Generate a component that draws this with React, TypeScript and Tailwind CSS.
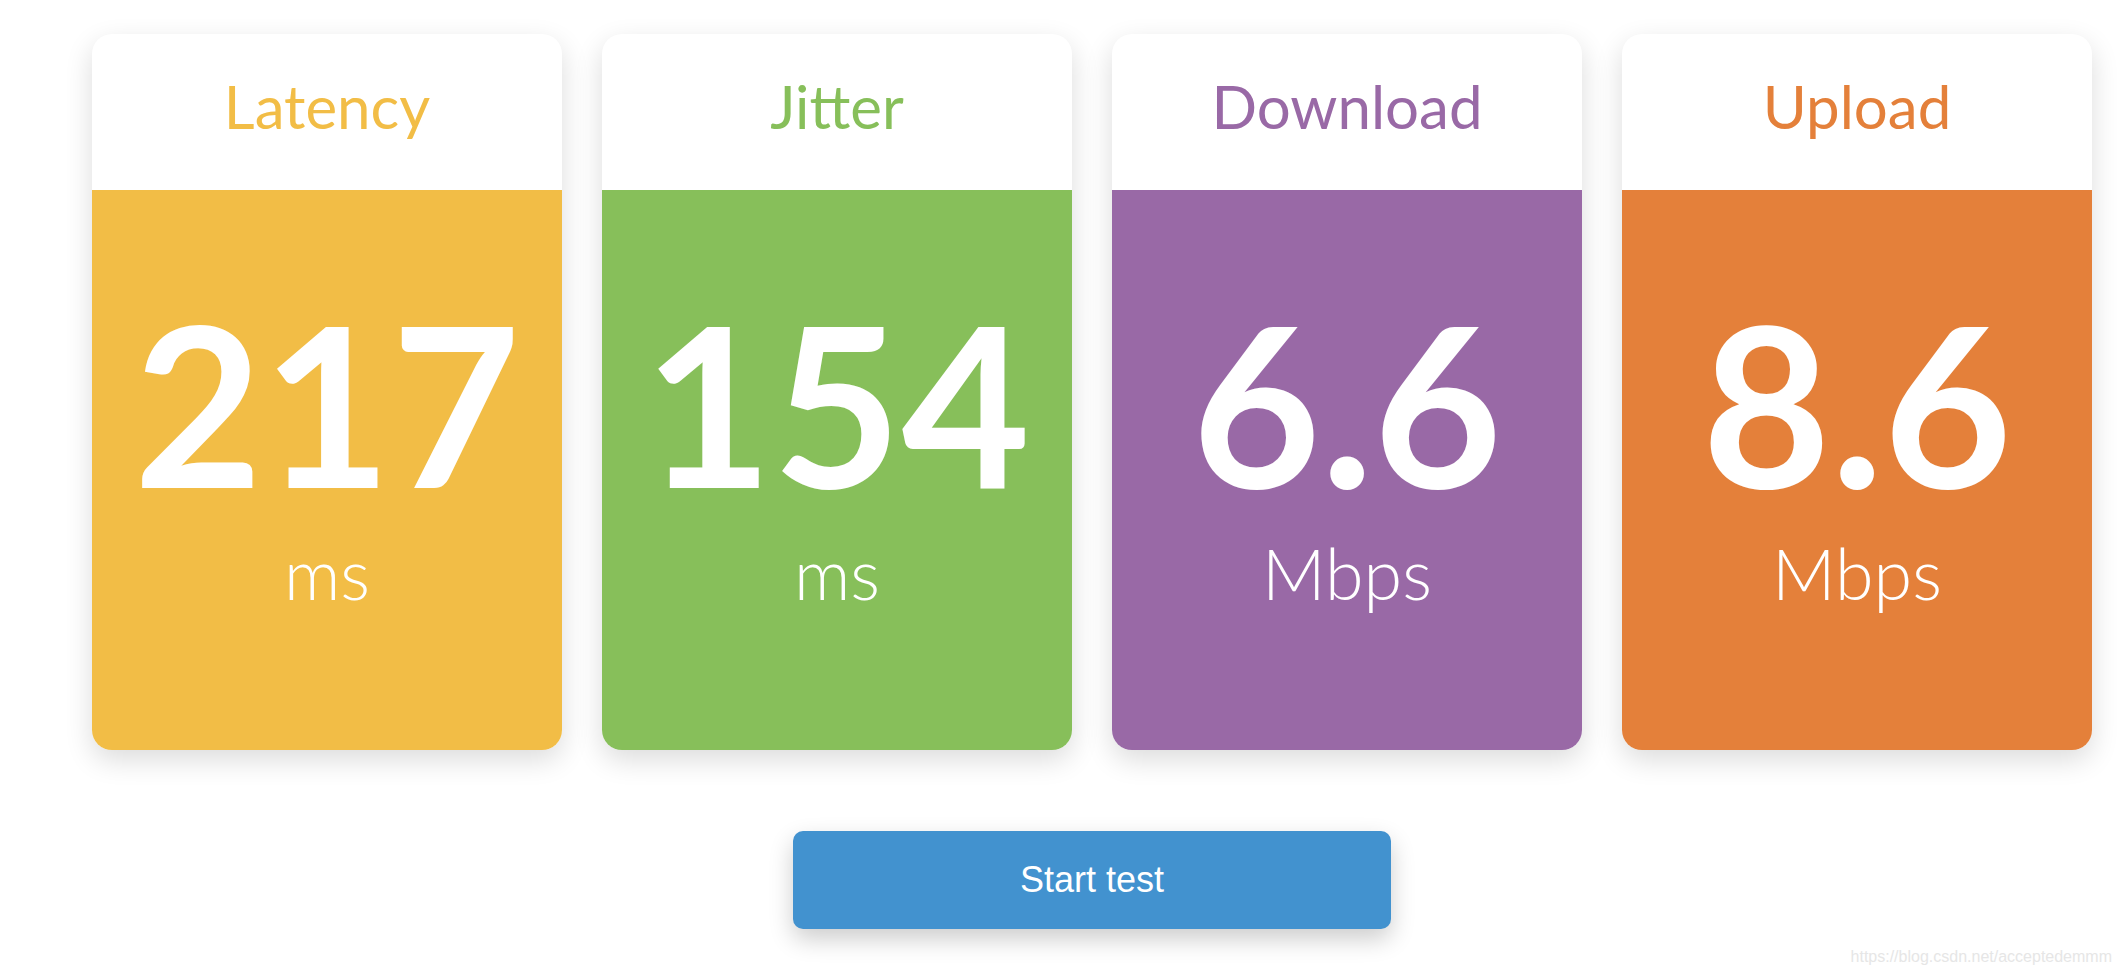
type Metric = {
  title: string;
  value: string;
  unit: string;
  text: string;
  bg: string;
};

const metrics: Metric[] = [
  { title: 'Latency', value: '217', unit: 'ms', text: 'text-[#f2bd46]', bg: 'bg-[#f2bd46]' },
  { title: 'Jitter', value: '154', unit: 'ms', text: 'text-[#87bf5a]', bg: 'bg-[#87bf5a]' },
  { title: 'Download', value: '6.6', unit: 'Mbps', text: 'text-[#9969a6]', bg: 'bg-[#9969a6]' },
  { title: 'Upload', value: '8.6', unit: 'Mbps', text: 'text-[#e4803a]', bg: 'bg-[#e4803a]' },
];

function MetricCard({ metric }: { metric: Metric }) {
  return (
    <div className="w-[470px] h-[716px] rounded-[20px] overflow-hidden bg-white shadow-[0_10px_28px_rgba(0,0,0,0.14)] flex flex-col">
      <div className="h-[156px] pt-[42px] text-center">
        <div className={`text-[60px] leading-none font-normal ${metric.text}`}>
          {metric.title}
        </div>
      </div>
      <div className={`flex-1 flex flex-col items-center text-white pt-[101px] ${metric.bg}`}>
        <div className="text-[222px] leading-none font-bold">{metric.value}</div>
        <div className="mt-[25px] text-[70px] leading-none font-light">{metric.unit}</div>
      </div>
    </div>
  );
}

export default function App() {
  return (
    <div className="relative w-[2118px] h-[976px] bg-white overflow-hidden font-['Lato',sans-serif]">
      <div className="pl-[92px] pt-[34px] flex gap-[40px]">
        {metrics.map((m) => (
          <MetricCard key={m.title} metric={m} />
        ))}
      </div>
      <div className="pl-[92px] w-[2092px] flex justify-center mt-[81px]">
        <button className="w-[598px] h-[98px] rounded-[10px] bg-[#4292cf] text-white text-[36px] font-['Liberation_Sans',Arial,sans-serif] shadow-[0_10px_24px_rgba(0,0,0,0.2)]">
          Start test
        </button>
      </div>
      <div className="absolute right-[6px] bottom-[7px] text-[16px] text-[#e6e6e6] font-['Liberation_Sans',Arial,sans-serif]">
        https://blog.csdn.net/acceptedemmm
      </div>
    </div>
  );
}
